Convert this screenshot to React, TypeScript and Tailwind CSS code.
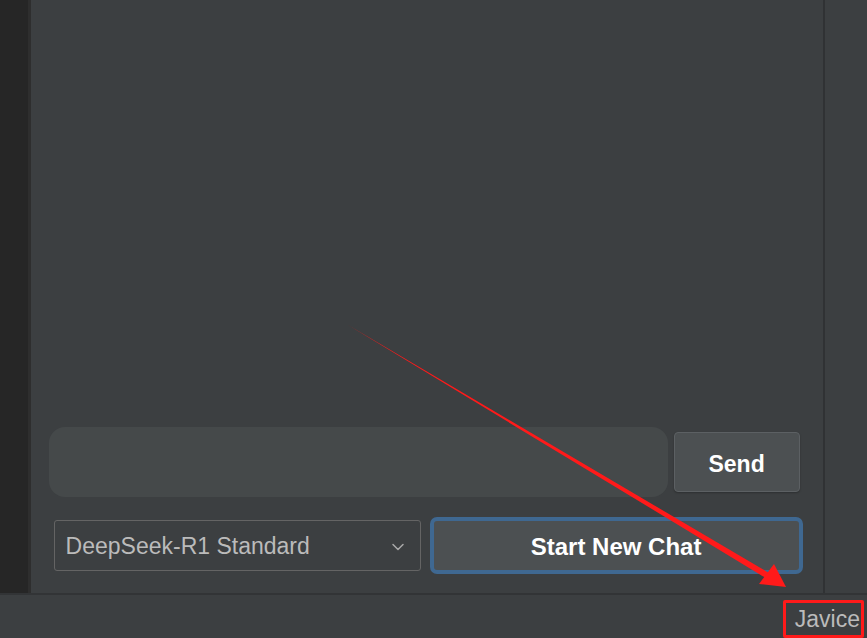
import { ChevronDown } from "lucide-react";

const App = () => {
  return (
    <div className="relative flex h-[638px] w-[867px] flex-col overflow-hidden bg-[#3c3f41] font-['Liberation_Sans',Arial,sans-serif]">
      <div className="flex flex-1">
        <div className="w-[28px] bg-[#262626]" />
        <div className="w-[3px] bg-[#2e2e2e]" />
        <div className="flex flex-1 flex-col justify-end pb-[19px] pl-[18px] pr-[20px]">
          <div className="flex items-center gap-[6px]">
            <div className="h-[70px] w-[619px] rounded-[16px] bg-[#45494a]" />
            <button className="h-[60px] w-[126px] rounded-[4px] border border-[#5c6063] bg-[#4c5052] pt-[4px] text-[23px] font-bold text-white shadow-[0_1px_2px_rgba(0,0,0,0.25)]">
              Send
            </button>
          </div>
          <div className="mt-[20px] flex items-center">
            <div className="ml-[5px] flex h-[51px] w-[367px] items-center justify-between rounded-[3px] border border-[#646464] pl-[11px] pr-[12px] pt-[2px] text-[23px] text-[#bbbbbb]">
              <span>DeepSeek-R1 Standard</span>
              <ChevronDown className="h-[20px] w-[20px] text-[#a9a9a9]" strokeWidth={1.8} />
            </div>
            <button className="ml-[9px] h-[57px] w-[373px] rounded-[7px] border-[4px] border-[#3f6891] bg-[#4c5052] pt-[2px] text-[24px] font-bold text-white">
              Start New Chat
            </button>
          </div>
        </div>
        <div className="w-[2px] bg-[#303234]" />
        <div className="w-[43px]" />
      </div>
      <div className="flex h-[45px] items-start justify-end border-t-2 border-[#323436] bg-[#3c3f41] pt-[5px] pr-[3px]">
        <span className="flex h-[38px] w-[81px] items-center justify-end rounded-[2px] border-[3px] border-[#ff1a1a] pr-[1px] text-[23px] leading-none text-[#bbbbbb]">
          Javice
        </span>
      </div>
      <svg className="pointer-events-none absolute left-0 top-0" width="867" height="638" viewBox="0 0 867 638">
        <polygon points="348,325 771.5,574.4 768.5,579.6" fill="#ff1a1a" />
        <polygon points="786,587 759,584 774,564" fill="#ff1a1a" />
      </svg>
    </div>
  );
};

export default App;
